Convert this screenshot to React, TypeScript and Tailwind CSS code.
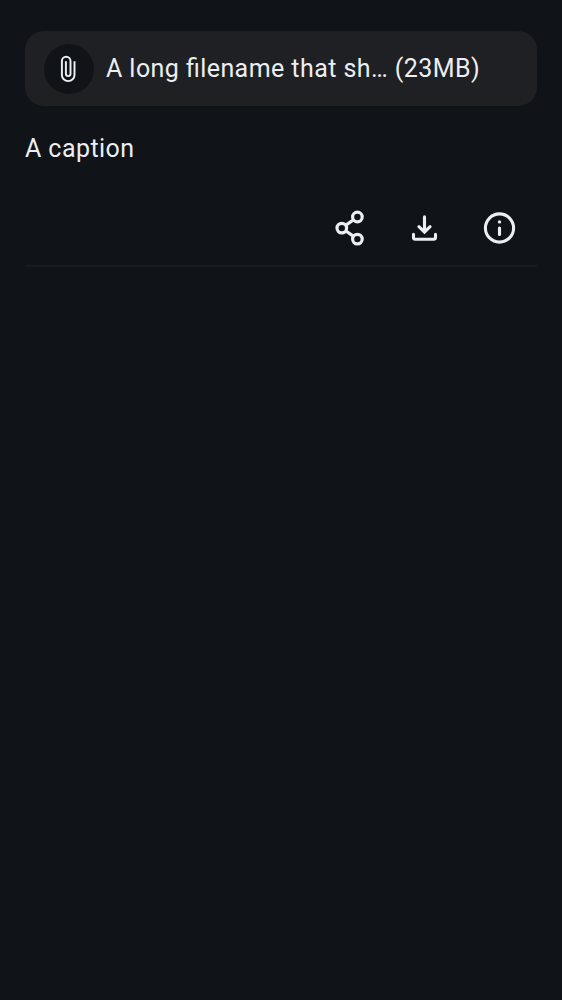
import React from "react";

function AttachmentIcon() {
  return (
    <svg width="50" height="50" viewBox="0 0 50 50" fill="none" stroke="#ebeef2" strokeWidth="1.95" strokeLinecap="butt">
      <path d="M30.5 17.2V30.9A6.3 6.2 0 0 1 17.9 30.9V17.1A4.3 4.3 0 0 1 26.5 17.1V29.8A2.3 2.3 0 0 1 21.9 29.8V17.2" />
    </svg>
  );
}

function ShareIcon() {
  return (
    <svg width="37" height="37" viewBox="0 0 37 37" fill="none" stroke="#ebeef2" strokeWidth="3.2">
      <circle cx="26.4" cy="8" r="4.8" />
      <circle cx="10.8" cy="19.1" r="4.8" />
      <circle cx="26.4" cy="30.1" r="4.8" />
      <path d="M14.6 16.4L22.6 10.7M14.6 21.8L22.6 27.4" />
    </svg>
  );
}

function DownloadIcon() {
  return (
    <svg width="37" height="37" viewBox="0 0 37 37" fill="none" stroke="#ebeef2" strokeWidth="3.1" strokeLinecap="round">
      <path d="M18.5 7.9V22" />
      <path d="M12.9 17.7L18.5 23L24.1 17.7" />
      <path d="M7.5 25.4V28.6Q7.5 30.2 9.1 30.2H27.9Q29.5 30.2 29.5 28.6V25.4" />
    </svg>
  );
}

function InfoIcon() {
  return (
    <svg width="37" height="37" viewBox="0 0 37 37" fill="none" stroke="#ebeef2" strokeWidth="3.1" strokeLinecap="round">
      <circle cx="18.5" cy="19" r="14.1" />
      <path d="M18.5 19.1V25.4" />
      <circle cx="18.5" cy="12.9" r="1.7" fill="#ebeef2" stroke="none" />
    </svg>
  );
}

const actions = [
  { label: "Share", Icon: ShareIcon },
  { label: "Save", Icon: DownloadIcon },
  { label: "Info", Icon: InfoIcon },
];

export default function App() {
  return (
    <main className="min-h-screen bg-[#101317] px-[25px] pt-[31px] font-['Roboto',sans-serif] text-[25px] leading-[37px] tracking-[0.43px] text-[#ebeef2]">
      <div className="flex h-[75px] items-center rounded-[19px] bg-[#1f2024] pl-[19px]">
        <div className="size-[50px] shrink-0 rounded-full bg-[#101317]">
          <AttachmentIcon />
        </div>
        <p className="ml-[12px] whitespace-nowrap [font-feature-settings:'liga'_1]">A long filename that sh… (23MB)</p>
      </div>
      <p className="mt-6">A caption</p>
      <div className="mt-[23px] flex h-[75px] justify-end">
        {actions.map(({ label, Icon }) => (
          <button key={label} aria-label={label} className="flex size-[75px] items-center justify-center">
            <Icon />
          </button>
        ))}
      </div>
      <div className="h-[2px] bg-[#181b1f]" />
    </main>
  );
}
